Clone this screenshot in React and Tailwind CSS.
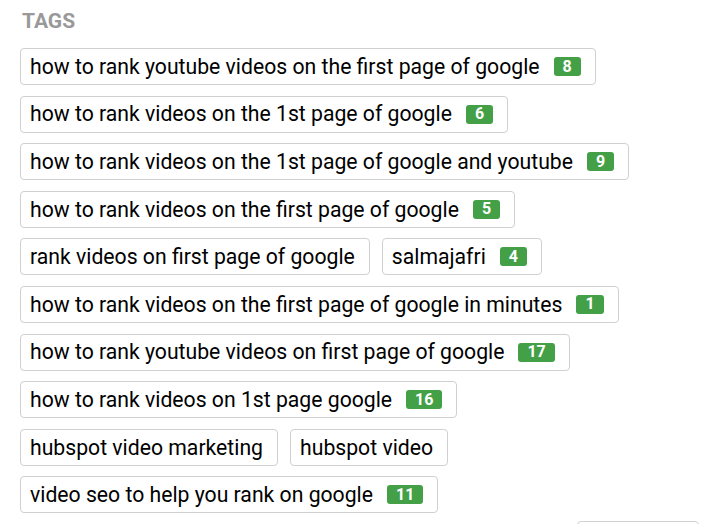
import React from "react";

const tags = [
  { label: "how to rank youtube videos on the first page of google", count: 8 },
  { label: "how to rank videos on the 1st page of google", count: 6 },
  { label: "how to rank videos on the 1st page of google and youtube", count: 9 },
  { label: "how to rank videos on the first page of google", count: 5 },
  { label: "rank videos on first page of google" },
  { label: "salmajafri", count: 4 },
  { label: "how to rank videos on the first page of google in minutes", count: 1 },
  { label: "how to rank youtube videos on first page of google", count: 17 },
  { label: "how to rank videos on 1st page google", count: 16 },
  { label: "hubspot video marketing" },
  { label: "hubspot video" },
  { label: "video seo to help you rank on google", count: 11 },
];

const Tag = ({ label, count }) => (
  <div className="h-[37px] flex items-center border border-[#d0d0d0] rounded-[4px] pl-[9px] pr-[14px] bg-white">
    <span className="text-[21.2px] text-black leading-none">{label}</span>
    {count !== undefined && (
      <span className="ml-[14px] h-[19px] min-w-[27px] px-[9px] flex items-center justify-center rounded-[3px] bg-[#43a047] text-white text-[16px] font-bold leading-none">
        {count}
      </span>
    )}
  </div>
);

const App = () => {
  return (
    <div className="w-[705px] h-[524px] bg-white overflow-hidden font-['Roboto',sans-serif]">
      <div className="pt-[10px] pl-[22px] text-[21px] font-bold text-[#999999] leading-[22px]">
        TAGS
      </div>
      {/* tag list */}
      <div className="flex flex-wrap gap-x-[12px] gap-y-[10.6px] pl-[20px] pr-[5px] mt-[16px]">
        {tags.map((t) => (
          <Tag key={t.label} label={t.label} count={t.count} />
        ))}
      </div>
      <div className="flex justify-end pr-[6px] mt-[8px]">
        <div className="w-[122px] h-[30px] border border-[#d0d0d0] rounded-[4px]" />
      </div>
    </div>
  );
};

export default App;
